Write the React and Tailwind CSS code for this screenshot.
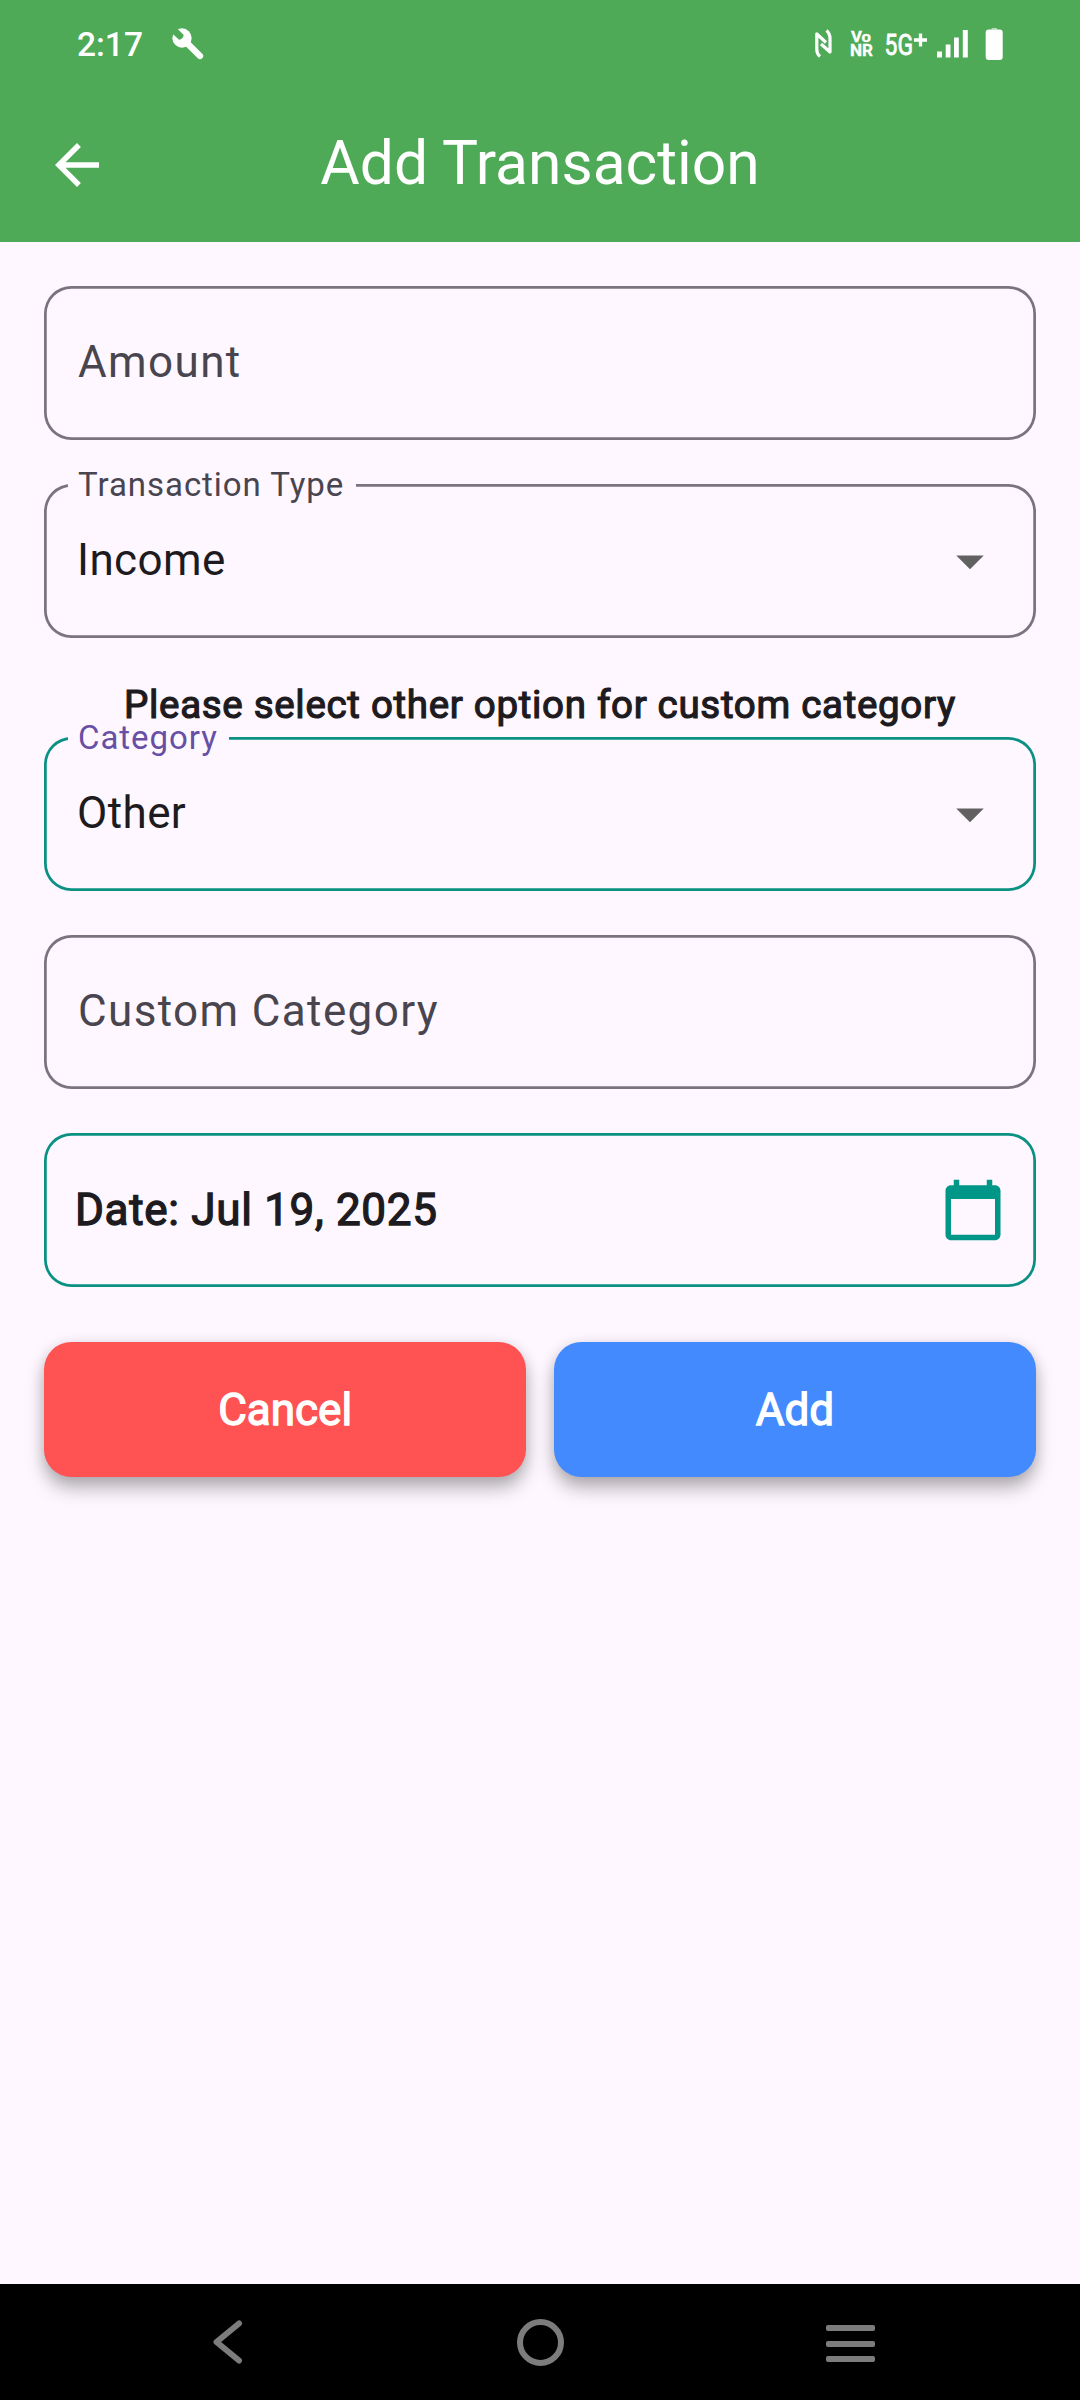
import { MdArrowBack, MdArrowDropDown, MdCalendarToday } from 'react-icons/md';

function StatusBar() {
  return (
    <div className="flex h-[88px] items-center justify-between pr-[77px] pl-[77px]">
      <div className="flex items-center">
        <span className="relative top-[1px] w-[95px] text-[33.5px] leading-[88px] font-medium">2:17</span>
        <svg className="h-[33px] w-[33px]" viewBox="515 86 99 99">
          <path d="M556 127L599 170" stroke="white" strokeWidth="19" strokeLinecap="round" />
          <circle cx="545" cy="116" r="29" fill="white" />
          <path d="M510 97L536 121Q548 120 550 107L525 82Z" fill="#4eaa56" />
        </svg>
      </div>
      {/* Connectivity and battery indicators share one 190x32 strip */}
      <svg className="h-[32px] w-[190px]" viewBox="0 0 190 32">
        <g fill="none" stroke="white" strokeWidth="3.200" strokeLinejoin="round">
          <path d="M7 28.5Q3.800 26 3.800 21.500V5.800L13 14.500" />
          <path d="M13.500 2.500Q17 5.500 17 10.500V24L8 16" />
        </g>
        <g fill="white" stroke="white" className="font-[Roboto]">
          <text x="38" y="14.400" fontSize="14.500" fontWeight="700" strokeWidth=".3" textLength="20" lengthAdjust="spacingAndGlyphs">Vo</text>
          <text x="37" y="28.300" fontSize="16.800" fontWeight="700" strokeWidth=".3" textLength="23" lengthAdjust="spacingAndGlyphs">NR</text>
          <text x="71.500" y="26.500" fontSize="29.500" fontWeight="400" strokeWidth=".8" textLength="28.500" lengthAdjust="spacingAndGlyphs">5G</text>
        </g>
        <path d="M101 12H114M107.500 5.500V18.500" stroke="white" strokeWidth="3.300" />
        <g fill="white">
          <rect x="124" y="23.500" width="5" height="6" />
          <rect x="132.700" y="16.500" width="4.800" height="13" />
          <rect x="141" y="9.500" width="4.800" height="20" />
          <rect x="149.800" y="2" width="5" height="27.500" />
          <rect x="172.700" y="1.500" width="17" height="30.500" rx="3" />
          <rect x="178.700" y="0" width="5.300" height="1.500" opacity=".6" />
        </g>
      </svg>
    </div>
  );
}

function Field({ label, labelWidth, labelColor, teal, className = '', children }) {
  return (
    <div
      className={`relative flex h-[154px] items-center rounded-[27.5px] ${
        teal
          ? 'shadow-[inset_0_0_0_2.75px_#0a9183]'
          : 'shadow-[inset_0_0_0_2.75px_#79747e]'
      } ${className}`}
    >
      {label && (
        <span
          className={`absolute top-[-1px] left-[23.5px] h-[7px] bg-[#fef7ff] pl-[10.5px] text-[33px] leading-[4px] tracking-[0.95px] whitespace-nowrap ${labelWidth} ${labelColor}`}
        >
          {label}
        </span>
      )}
      {children}
    </div>
  );
}

function Select({ value, ...props }) {
  return (
    <Field {...props} className="justify-between pr-[33px] pl-[33px]">
      <span className="relative top-[-1px] text-[44px] tracking-[0.41px] text-[#1d1b20]">{value}</span>
      <MdArrowDropDown className="size-[66px] text-[#616161]" />
    </Field>
  );
}

function TextInput({ placeholder }) {
  return (
    <Field className="pl-[34px]">
      <span className="relative top-[-1px] text-[44px] tracking-[1.375px] text-[#49454f]">{placeholder}</span>
    </Field>
  );
}

function Button({ className, children }) {
  return (
    <button
      className={`h-[135px] flex-1 rounded-[27.5px] text-[44px] text-white shadow-[0_12px_18px_rgba(0,0,0,0.26),0_2px_14px_rgba(0,0,0,0.12)] [-webkit-text-stroke:1.3px_#fff] ${className}`}
    >
      {children}
    </button>
  );
}

export default function App() {
  return (
    <div className="flex h-[2400px] w-[1080px] flex-col bg-[#fef7ff] font-[Roboto,sans-serif]">
      <header className="h-[242px] bg-[#4eaa56] text-white">
        <StatusBar />
        <div className="flex h-[154px] items-center pr-[44px] pl-[44px]">
          <MdArrowBack className="size-[66px]" />
          <h1 className="relative top-[-1px] flex-1 pr-[66px] text-center text-[60.5px] leading-none">Add Transaction</h1>
        </div>
      </header>

      <main className="flex flex-1 flex-col px-[44px] pt-[44px]">
        <TextInput placeholder="Amount" />
        <div className="h-[44px]" />
        <Select label="Transaction Type" labelWidth="w-[288px]" labelColor="text-[#49454f]" value="Income" />
        <p className="mt-[44px] h-[55px] text-center text-[38.5px] leading-[45px] tracking-[0.69px] text-[#1d1b20] [-webkit-text-stroke:1.2px_#1d1b20]">
          Please select other option for custom category
        </p>
        <Select label="Category" labelWidth="w-[161px]" labelColor="text-[#6750a4]" teal value="Other" />
        <div className="h-[44px]" />
        <TextInput placeholder="Custom Category" />
        <div className="h-[44px]" />
        <Field teal className="justify-between pr-[30px] pl-[31px]">
          <span className="text-[44px] tracking-[0.69px] text-[#1d1b20] [-webkit-text-stroke:1.3px_#1d1b20]">
            Date: Jul 19, 2025
          </span>
          <MdCalendarToday className="size-[66px] text-[#009688]" />
        </Field>
        <div className="mt-[55px] flex gap-[27.5px]">
          <Button className="bg-[#ff5252]">Cancel</Button>
          <Button className="bg-[#448aff]">Add</Button>
        </div>
      </main>

      <nav className="flex h-[116px] items-center justify-between bg-black pr-[205px] pl-[212px]">
        <svg className="h-[48px] w-[32px]" viewBox="0 0 32 48" fill="none">
          <path d="M27 5.500L4.500 24L27 42.500" stroke="#7c7c7c" strokeWidth="6" strokeLinecap="round" strokeLinejoin="round" />
        </svg>
        <div className="ml-[11px] size-[47px] rounded-full border-[6px] border-[#7c7c7c]" />
        <div className="mt-[3px] flex w-[49px] flex-col gap-[9.500px]">
          <span className="h-[6px] rounded-[2px] bg-[#7c7c7c]" />
          <span className="h-[6px] rounded-[2px] bg-[#7c7c7c]" />
          <span className="h-[6px] rounded-[2px] bg-[#7c7c7c]" />
        </div>
      </nav>
    </div>
  );
}
